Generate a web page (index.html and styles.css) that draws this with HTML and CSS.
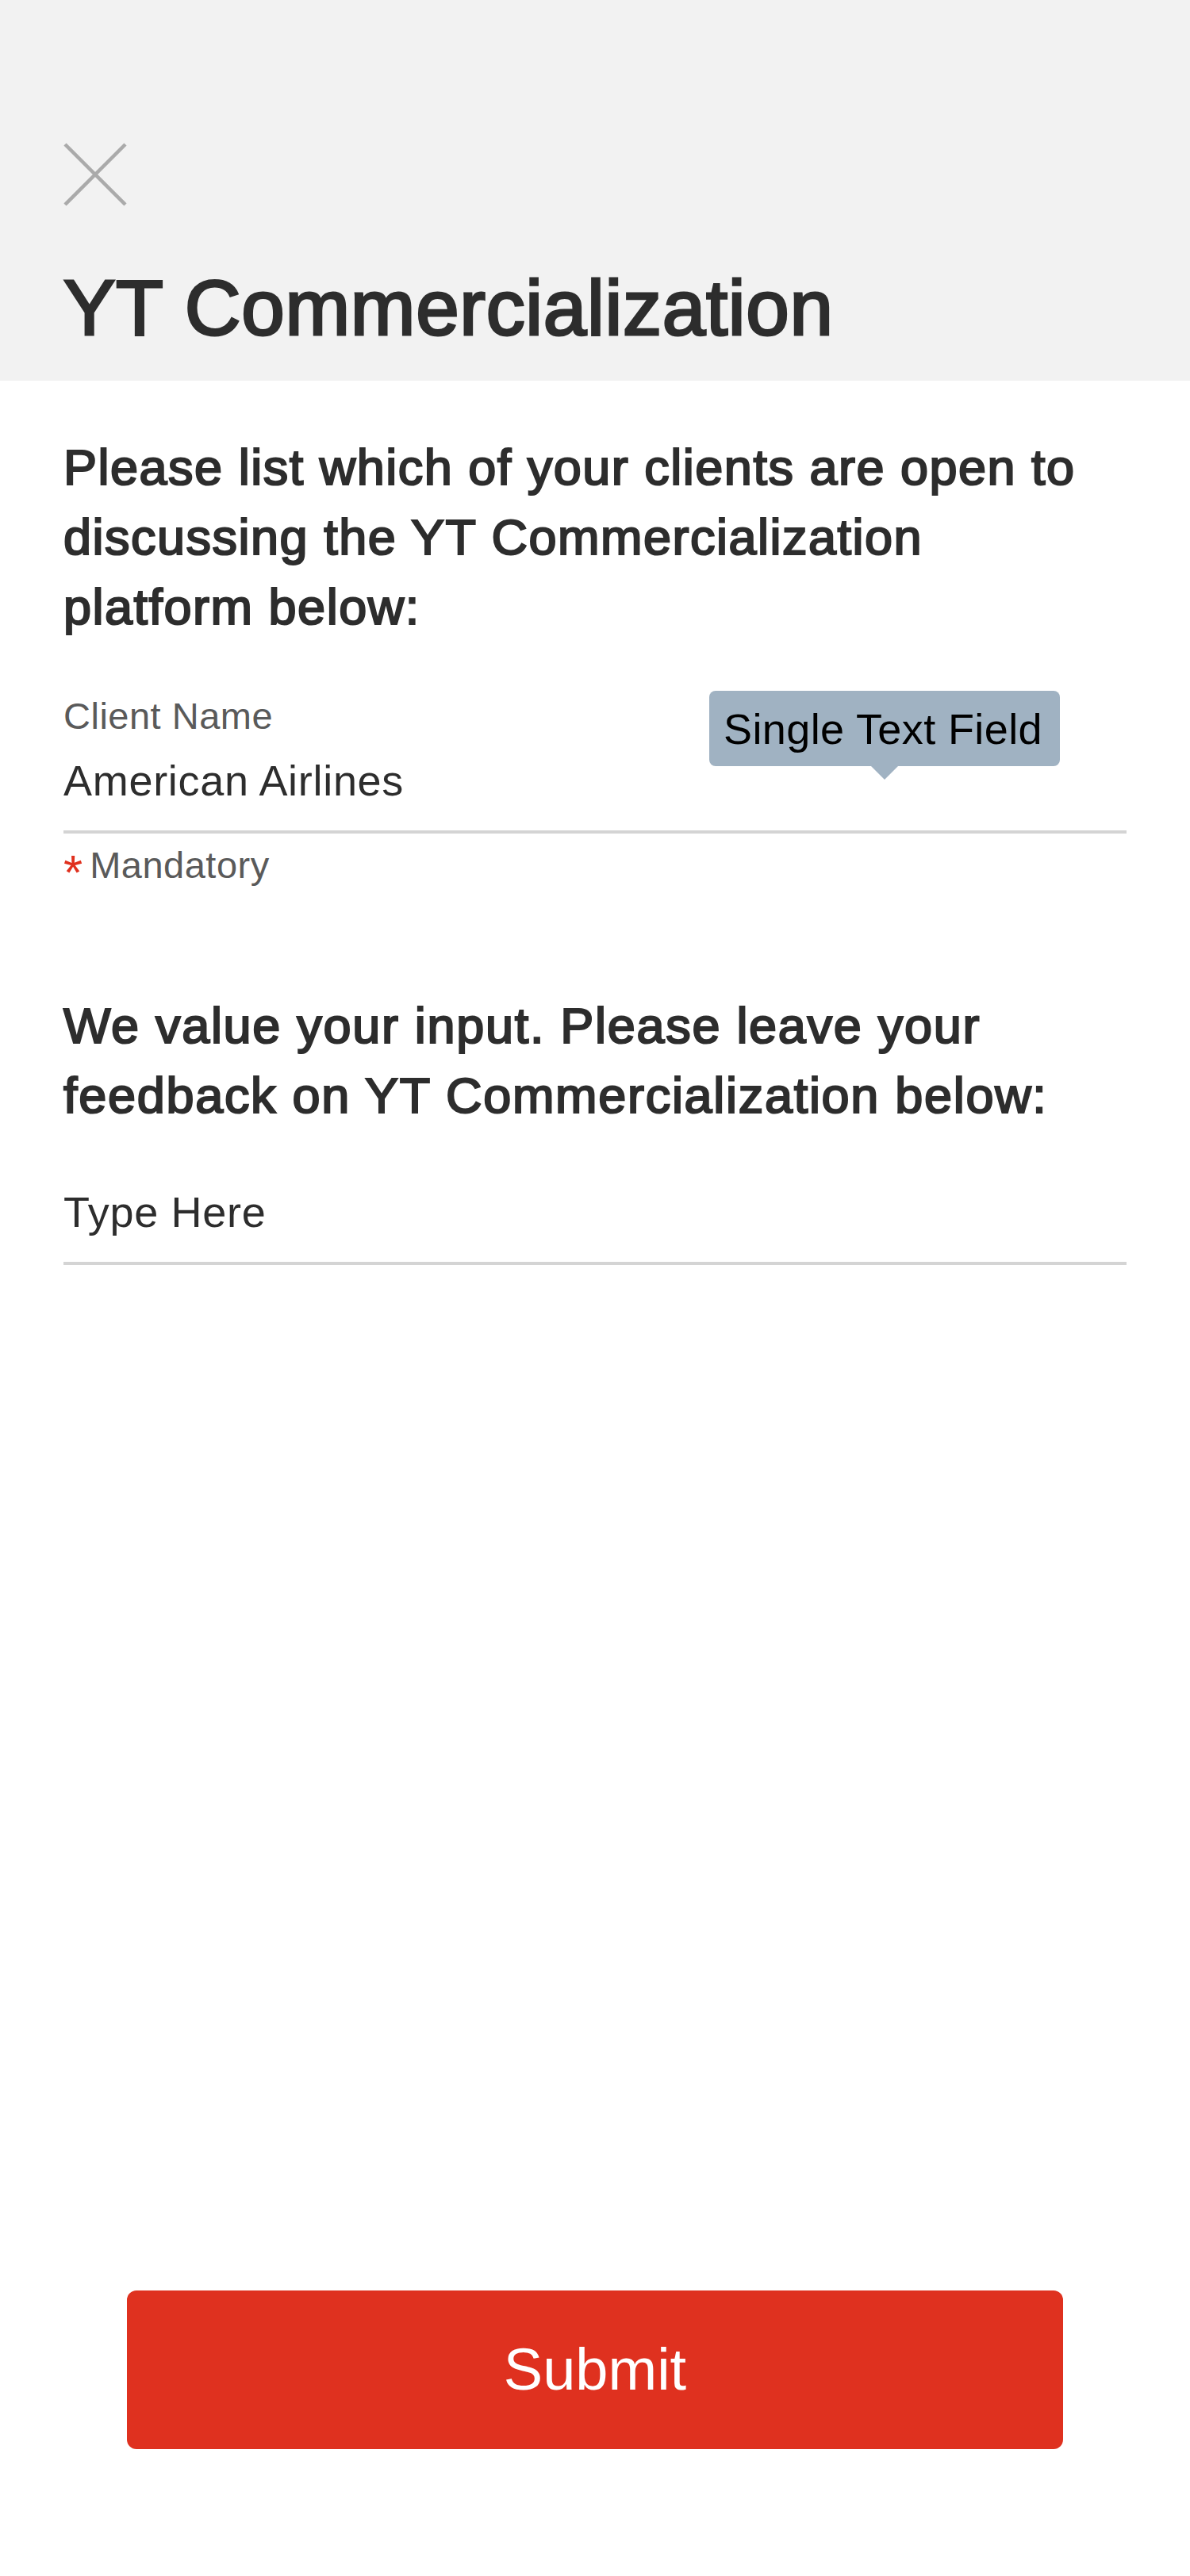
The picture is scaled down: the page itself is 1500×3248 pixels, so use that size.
FILE: index.html
```html
<!DOCTYPE html>
<html lang="en">
<head>
<meta charset="utf-8">
<title>YT Commercialization</title>
<link rel="stylesheet" href="styles.css">
</head>
<body>
<div class="screen">
  <header class="header">
    <button class="close" aria-label="Close">
      <svg width="80" height="80" viewBox="0 0 80 80"><path d="M2 2 L78 78 M78 2 L2 78" stroke="#aaaaaa" stroke-width="4.5" fill="none"/></svg>
    </button>
    <h1 class="title">YT Commercialization</h1>
  </header>
  <main class="form">
    <section class="question">
      <p class="prompt">Please list which of your clients are open to discussing the YT Commercialization platform below:</p>
      <div class="field field-labeled">
        <div class="label">Client Name</div>
        <div class="value">American Airlines</div>
        <div class="tooltip">Single Text Field</div>
      </div>
      <div class="hint"><span class="star">*</span>Mandatory</div>
    </section>
    <section class="question question-second">
      <p class="prompt prompt-wide">We value your input. Please leave your feedback on YT Commercialization below:</p>
      <div class="field field-plain">
        <div class="value">Type Here</div>
      </div>
    </section>
  </main>
  <footer class="footer">
    <button class="submit">Submit</button>
  </footer>
</div>
</body>
</html>
```

FILE: styles.css
```css
html, body {
  margin: 0;
  padding: 0;
  background: #ffffff;
}

body {
  font-family: "Liberation Sans", Arial, sans-serif;
  color: #2d2d2d;
}

.screen {
  width: 1500px;
  min-height: 3248px;
  display: flex;
  flex-direction: column;
}

.header {
  background: #f2f2f2;
  padding: 180px 80px 37px;
  display: flex;
  flex-direction: column;
  align-items: flex-start;
}

.close {
  width: 80px;
  height: 80px;
  padding: 0;
  margin: 0;
  border: 0;
  background: none;
  display: block;
}

.close svg {
  display: block;
}

.title {
  margin: 73px 0 0;
  font-size: 98px;
  line-height: 110px;
  font-weight: normal;
  letter-spacing: 0.7px;
  -webkit-text-stroke: 3px #2d2d2d;
  color: #2d2d2d;
}

.form {
  flex: 1;
  padding: 0 80px;
}

.question {
  display: flex;
  flex-direction: column;
}

.prompt {
  margin: 65px 0 0;
  font-size: 63px;
  line-height: 88px;
  letter-spacing: 1.5px;
  -webkit-text-stroke: 2.2px #2d2d2d;
  color: #2d2d2d;
}

.question-second .prompt {
  margin-top: 130px;
  letter-spacing: 1.7px;
}

.field {
  position: relative;
  border-bottom: 4px solid #d4d4d4;
  padding-bottom: 31px;
}

.field-labeled {
  margin-top: 66px;
}

.field-plain {
  margin-top: 71px;
}

.label {
  font-size: 47px;
  line-height: 56px;
  letter-spacing: 0.5px;
  color: #5a5a5a;
}

.field-labeled .value {
  margin-top: 21px;
}

.value {
  font-size: 54px;
  line-height: 64px;
  letter-spacing: 0.7px;
  color: #2d2d2d;
}

.tooltip {
  position: absolute;
  top: -4px;
  right: 84px;
  height: 95px;
  box-sizing: border-box;
  padding: 2px 22px 0 18px;
  background: #a0b2c2;
  border-radius: 8px;
  font-size: 54px;
  line-height: 93px;
  letter-spacing: 0.4px;
  color: #000000;
  white-space: nowrap;
}

.tooltip::after {
  content: "";
  position: absolute;
  left: 50%;
  bottom: -17px;
  margin-left: -17px;
  border-left: 17px solid transparent;
  border-right: 17px solid transparent;
  border-top: 17px solid #a0b2c2;
}

.hint {
  margin-top: 12px;
  font-size: 47px;
  line-height: 56px;
  letter-spacing: 0.5px;
  color: #5a5a5a;
}

.star {
  color: #e0301e;
  font-size: 62px;
  line-height: 0;
  position: relative;
  top: 14px;
  margin-right: 9px;
  letter-spacing: 0;
}

.footer {
  padding: 0 160px 160px;
}

.submit {
  display: block;
  width: 100%;
  height: 200px;
  margin: 0;
  border: 0;
  border-radius: 12px;
  background: #df311f;
  color: #ffffff;
  font-family: "Liberation Sans", Arial, sans-serif;
  font-size: 74px;
  line-height: 200px;
  padding: 0;
}
```
